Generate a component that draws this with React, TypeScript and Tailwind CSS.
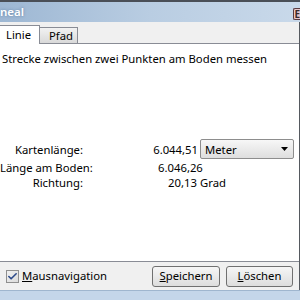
import { Check } from 'lucide-react'

const FONT = { fontFamily: '"Noto Sans", "DejaVu Sans", sans-serif' }

export default function App() {
  return (
    <div className="w-[300px] h-[300px] overflow-hidden bg-[#f0f0f0] flex flex-col text-[11.3px] text-black leading-none whitespace-nowrap" style={FONT}>
      <div className="h-[2px] bg-[#4a4f57] shrink-0" />
      {/* title bar */}
      <div className="h-[20px] shrink-0 bg-gradient-to-r from-[#9db7d3] via-[#b9cde2] to-[#c9d9ea] flex items-center justify-between">
        <span className="text-white text-[11.5px] font-semibold [text-shadow:0_0_3px_#5d7ea3]">neal</span>
        <div className="w-[7px] h-[12px] mt-[4px] bg-[#e8c8cc] border border-[#5a3b40] border-r-0 rounded-l-[2px] flex items-center justify-end overflow-hidden">
          <span className="text-[10px] text-[#3a2a2a] font-bold">E</span>
        </div>
      </div>
      <div className="flex-1 flex flex-col border-r border-[#55595f]">
        {/* tabs */}
        <div className="h-[21px] shrink-0 flex items-end pt-[2px]">
          <div className="w-[40px] h-[19px] bg-white border border-b-0 border-[#898c95] border-l-0 flex items-center pl-[6px] relative z-10 -mb-px">
            Linie
          </div>
          <div className="w-[38px] h-[16px] bg-gradient-to-b from-[#f2f2f2] to-[#d9d9d9] border border-l-0 border-[#898c95] border-b-0 flex items-center pl-[9px]">
            Pfad
          </div>
        </div>
        {/* panel */}
        <div className="h-[219px] shrink-0 bg-white border-t border-b border-[#898c95] flex flex-col">
          <div className="pl-[2px] pt-[9px]">Strecke zwischen zwei Punkten am Boden messen</div>
          <div className="mt-[75px] grid grid-cols-[84px_116px_auto] items-center">
            <div className="text-right pr-[1px]">Kartenlänge:</div>
            <div className="text-right pr-[2px]">6.044,51</div>
            <div className="w-[94px] h-[20px] bg-gradient-to-b from-[#f7f7f7] to-[#dedede] border border-[#8d8d8d] rounded-[2px] flex items-center justify-between pl-[4px] pr-[5px]">
              <span>Meter</span>
              <svg width="7" height="4" viewBox="0 0 7 4"><path d="M0 0H7L3.5 4Z" fill="#000" /></svg>
            </div>
            <div className="text-right pr-[1px] mt-[3px]">Länge am Boden:</div>
            <div className="text-left pl-[74px] mt-[3px]">6.046,26</div>
            <div className="mt-[3px]" />
            <div className="text-right pr-[1px] mt-[3px]">Richtung:</div>
            <div className="text-right pr-[3px] mt-[3px]">20,13</div>
            <div className="mt-[3px]">Grad</div>
          </div>
        </div>
        {/* bottom bar */}
        <div className="h-[28px] shrink-0 flex items-center pl-[6px] pr-[6px]">
          <div className="w-[13px] h-[13px] border border-[#8f8f8f] bg-gradient-to-br from-[#f0f0f0] to-[#dcdcdc] flex items-center justify-center">
            <Check className="w-[11px] h-[11px] text-[#2c4a8a]" strokeWidth={3.5} />
          </div>
          <span className="ml-[3px]"><span className="underline">M</span>ausnavigation</span>
          <div className="ml-auto flex gap-[6px]">
            <div className="w-[68px] h-[21px] border border-[#707070] rounded-[3px] bg-gradient-to-b from-[#f6f6f6] to-[#dddddd] flex items-center justify-center">
              <span><span className="underline">S</span>peichern</span>
            </div>
            <div className="w-[67px] h-[21px] border border-[#707070] rounded-[3px] bg-gradient-to-b from-[#f6f6f6] to-[#dddddd] flex items-center justify-center">
              <span><span className="underline">L</span>öschen</span>
            </div>
          </div>
        </div>
      </div>
      <div className="h-[10px] shrink-0 bg-[#c4d6ea] border-t border-[#9fb6cf]" />
    </div>
  )
}
